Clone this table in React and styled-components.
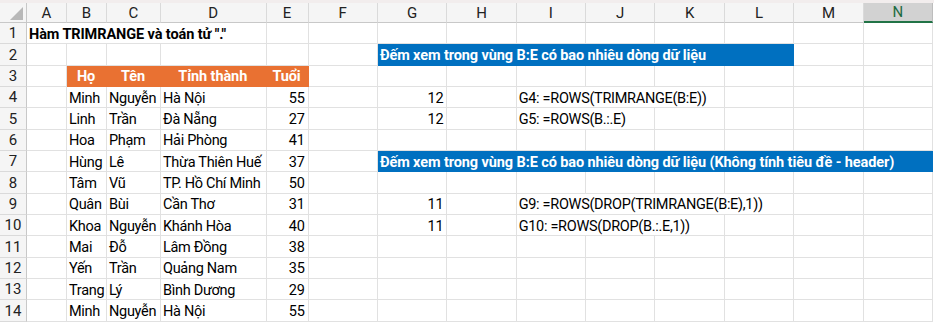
import React from "react";
import styled, { createGlobalStyle } from "styled-components";

const COLS = ["A", "B", "C", "D", "E", "F", "G", "H", "I", "J", "K", "L", "M", "N"];
const TEMPLATE = "27px 40px 40px 54px 105.5px 42px repeat(9, 69.4px)";
const ROW_H = 21.35;

const ORANGE = "#e97132";
const BLUE = "#0070c0";
const GRID = "#e1e1e1";

const GlobalStyle = createGlobalStyle`
  html, body {
    margin: 0;
    padding: 0;
    background: #ffffff;
  }
  body {
    font-family: Roboto, "Liberation Sans", Arial, sans-serif;
    overflow: hidden;
  }
`;

const Sheet = styled.div`
  width: 934px;
  height: 323px;
  overflow: hidden;
  background: #ffffff;
`;

const TopStrip = styled.div`
  height: 3px;
  background: #f2eded;
`;

const Row = styled.div`
  display: grid;
  grid-template-columns: ${TEMPLATE};
  height: ${(p) => p.$height}px;
`;

const Corner = styled.div`
  position: relative;
  background: #f5f5f5;
  border-right: 1px solid #c8c8c8;
  border-bottom: 1px solid #c8c8c8;
  box-sizing: border-box;

  svg {
    position: absolute;
    right: 3px;
    bottom: 2px;
  }
`;

const ColHeader = styled.div`
  display: flex;
  align-items: center;
  justify-content: center;
  box-sizing: border-box;
  background: ${(p) => (p.$active ? "#d2d2d2" : "#f5f5f5")};
  border-right: 1px solid ${(p) => (p.$active ? "#bdbdbd" : "#dadada")};
  border-bottom: ${(p) => (p.$active ? "2px solid #217346" : "1px solid #c8c8c8")};
  color: ${(p) => (p.$active ? "#1e6b41" : "#222222")};
  font-size: 15px;
`;

const RowHeader = styled.div`
  display: flex;
  align-items: center;
  justify-content: center;
  box-sizing: border-box;
  background: #f5f5f5;
  border-right: 1px solid #c8c8c8;
  border-bottom: 1px solid #dadada;
  color: #222222;
  font-size: 15px;
`;

const Cell = styled.div`
  grid-column: span ${(p) => p.$span || 1};
  display: flex;
  align-items: center;
  justify-content: ${(p) =>
    p.$align === "right" ? "flex-end" : p.$align === "center" ? "center" : "flex-start"};
  box-sizing: border-box;
  padding: 2px 3px 0 2px;
  background: ${(p) => p.$fill || "transparent"};
  border-right: 1px solid ${(p) => p.$fill || GRID};
  border-bottom: 1px solid ${(p) => p.$fill || GRID};
  color: ${(p) => (p.$fill ? "#ffffff" : "#000000")};
  font-weight: ${(p) => (p.$bold ? 700 : 400)};
  font-size: 14.5px;
  letter-spacing: ${(p) => (p.$bold ? "-0.1px" : "-0.3px")};
  white-space: nowrap;
  overflow: visible;
`;

const people = [
  ["Minh", "Nguyễn", "Hà Nội", 55],
  ["Linh", "Trần", "Đà Nẵng", 27],
  ["Hoa", "Phạm", "Hải Phòng", 41],
  ["Hùng", "Lê", "Thừa Thiên Huế", 37],
  ["Tâm", "Vũ", "TP. Hồ Chí Minh", 50],
  ["Quân", "Bùi", "Cần Thơ", 31],
  ["Khoa", "Nguyễn", "Khánh Hòa", 40],
  ["Mai", "Đỗ", "Lâm Đồng", 38],
  ["Yến", "Trần", "Quảng Nam", 35],
  ["Trang", "Lý", "Bình Dương", 29],
  ["Minh", "Nguyễn", "Hà Nội", 55],
];

// cells by row number, keyed by column index (0 = A)
const sheet = {
  1: { 0: { text: 'Hàm TRIMRANGE và toán tử "."', span: 4, bold: true } },
  2: {
    6: {
      text: "Đếm xem trong vùng B:E có bao nhiêu dòng dữ liệu",
      span: 6,
      bold: true,
      fill: BLUE,
    },
  },
  3: {
    1: { text: "Họ", align: "center", bold: true, fill: ORANGE },
    2: { text: "Tên", align: "center", bold: true, fill: ORANGE },
    3: { text: "Tỉnh thành", align: "center", bold: true, fill: ORANGE },
    4: { text: "Tuổi", align: "center", bold: true, fill: ORANGE },
  },
  7: {
    6: {
      text: "Đếm xem trong vùng B:E có bao nhiêu dòng dữ liệu (Không tính tiêu đề - header)",
      span: 8,
      bold: true,
      fill: BLUE,
    },
  },
};

people.forEach(([ho, ten, tinh, tuoi], i) => {
  const r = i + 4;
  sheet[r] = {
    ...(sheet[r] || {}),
    1: { text: ho },
    2: { text: ten },
    3: { text: tinh },
    4: { text: tuoi, align: "right" },
  };
});

const extras = {
  4: [12, "G4: =ROWS(TRIMRANGE(B:E))", 3],
  5: [12, "G5: =ROWS(B.:.E)", 2],
  9: [11, "G9: =ROWS(DROP(TRIMRANGE(B:E),1))", 4],
  10: [11, "G10: =ROWS(DROP(B.:.E,1))", 3],
};

Object.entries(extras).forEach(([r, [count, formula, span]]) => {
  sheet[r] = {
    ...(sheet[r] || {}),
    6: { text: count, align: "right" },
    8: { text: formula, span },
  };
});

const renderCells = (rowNo) => {
  const spec = sheet[rowNo] || {};
  const cells = [];
  let c = 0;
  while (c < COLS.length) {
    const cell = spec[c];
    if (cell) {
      cells.push(
        <Cell
          key={c}
          $span={cell.span}
          $align={cell.align}
          $bold={cell.bold}
          $fill={cell.fill}
        >
          {cell.text}
        </Cell>
      );
      c += cell.span || 1;
    } else {
      cells.push(<Cell key={c} />);
      c += 1;
    }
  }
  return cells;
};

const App = () => {
  const rows = Array.from({ length: 14 }, (_, i) => i + 1);
  return (
    <Sheet>
      <GlobalStyle />
      <TopStrip />
      <Row $height={20}>
        <Corner>
          <svg width="13" height="13" viewBox="0 0 13 13">
            <polygon points="13,0 13,13 0,13" fill="#b8b8b8" />
          </svg>
        </Corner>
        {COLS.map((col) => (
          <ColHeader key={col} $active={col === "N"}>
            {col}
          </ColHeader>
        ))}
      </Row>
      {rows.map((r) => (
        <Row key={r} $height={ROW_H}>
          <RowHeader>{r}</RowHeader>
          {renderCells(r)}
        </Row>
      ))}
    </Sheet>
  );
};

export default App;
